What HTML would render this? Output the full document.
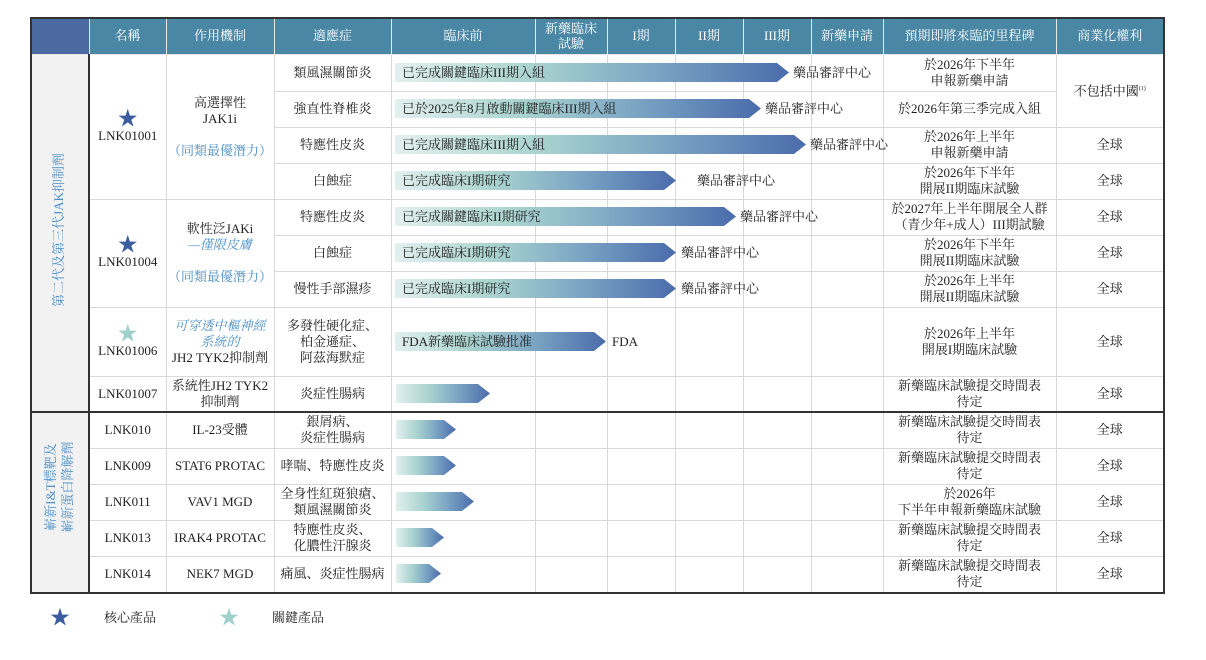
<!DOCTYPE html>
<html><head><meta charset="utf-8"><style>
*{margin:0;padding:0;box-sizing:border-box}
body{width:1206px;height:660px;background:#fff;position:relative;overflow:hidden;font-family:"Liberation Serif","Noto Serif CJK SC","Noto Sans CJK SC",serif;color:#222;font-size:13px}
table{position:absolute;left:30px;top:17px;border-collapse:collapse;table-layout:fixed;width:1133px;border:2px solid #333}
td,th{border:1px solid #d8d8d8;text-align:center;vertical-align:middle;line-height:16px;padding:0;overflow:visible;white-space:nowrap}
th{background:#4a87a5;color:#fff;font-weight:normal;border-color:#e8e8e8;height:36px}
th.c0{background:#4b6aa0}
td.grp{background:#f2f2f2;border-right:2px solid #333;color:#4a8fc8}
tr.sep td{border-top:2px solid #333}
.blue{color:#4a8fc8}
.it{font-style:italic}
.arrow{position:absolute;height:19px;background:linear-gradient(90deg,#e2f0ef 0%,#a9d3cf 35%,#7da6c4 65%,#4a6cab 100%);clip-path:polygon(0 0,calc(100% - 12px) 0,100% 50%,calc(100% - 12px) 100%,0 100%);padding-left:7px;line-height:19px;font-size:13px;color:#222;white-space:nowrap}
.lbl{position:absolute;font-size:13px;white-space:nowrap;line-height:16px}
.vt{position:absolute;transform:rotate(-90deg);white-space:nowrap;color:#4a8fc8;font-size:13px;line-height:16px;text-align:center}
.star{font-size:20px;color:#3b5da0;line-height:18px;display:block}
.star2{font-size:20px;color:#9fd0cc;line-height:18px;display:block}
sup{font-size:6px}
</style></head><body>
<table>
<colgroup><col style="width:58px"><col style="width:77px"><col style="width:108px"><col style="width:117px"><col style="width:144px"><col style="width:72px"><col style="width:68px"><col style="width:68px"><col style="width:68px"><col style="width:72px"><col style="width:173px"><col style="width:108px"></colgroup>
<tr><th class="c0"></th><th>名稱</th><th>作用機制</th><th>適應症</th><th>臨床前</th><th style="line-height:15px">新藥臨床<br>試驗</th><th>I期</th><th>II期</th><th>III期</th><th>新藥申請</th><th>預期即將來臨的里程碑</th><th>商業化權利</th></tr>
<tr style="height:37px"><td class="grp" rowspan="9"></td><td rowspan="4"><span class="star">★</span>LNK01001</td><td rowspan="4">高選擇性<br>JAK1i<br><br><span class="blue">（同類最優潛力）</span></td><td>類風濕關節炎</td><td></td><td></td><td></td><td></td><td></td><td></td><td>於2026年下半年<br>申報新藥申請</td><td rowspan="2">不包括中國<sup>(1)</sup></td></tr>
<tr style="height:36px"><td>強直性脊椎炎</td><td></td><td></td><td></td><td></td><td></td><td></td><td>於2026年第三季完成入組</td></tr>
<tr style="height:36px"><td>特應性皮炎</td><td></td><td></td><td></td><td></td><td></td><td></td><td>於2026年上半年<br>申報新藥申請</td><td>全球</td></tr>
<tr style="height:36px"><td>白蝕症</td><td></td><td></td><td></td><td></td><td></td><td></td><td>於2026年下半年<br>開展II期臨床試驗</td><td>全球</td></tr>
<tr style="height:36px"><td rowspan="3"><span class="star">★</span>LNK01004</td><td rowspan="3">軟性泛JAKi<br><span class="blue it">—僅限皮膚</span><br><br><span class="blue">（同類最優潛力）</span></td><td>特應性皮炎</td><td></td><td></td><td></td><td></td><td></td><td></td><td>於2027年上半年開展全人群<br>（青少年+成人）III期試驗</td><td>全球</td></tr>
<tr style="height:36px"><td>白蝕症</td><td></td><td></td><td></td><td></td><td></td><td></td><td>於2026年下半年<br>開展II期臨床試驗</td><td>全球</td></tr>
<tr style="height:36px"><td>慢性手部濕疹</td><td></td><td></td><td></td><td></td><td></td><td></td><td>於2026年上半年<br>開展II期臨床試驗</td><td>全球</td></tr>
<tr style="height:69px"><td><span class="star2">★</span>LNK01006</td><td><span class="blue it">可穿透中樞神經<br>系統的</span><br>JH2 TYK2抑制劑</td><td>多發性硬化症、<br>柏金遜症、<br>阿茲海默症</td><td></td><td></td><td></td><td></td><td></td><td></td><td>於2026年上半年<br>開展I期臨床試驗</td><td>全球</td></tr>
<tr style="height:36px"><td>LNK01007</td><td>系統性JH2 TYK2<br>抑制劑</td><td>炎症性腸病</td><td></td><td></td><td></td><td></td><td></td><td></td><td>新藥臨床試驗提交時間表<br>待定</td><td>全球</td></tr>
<tr class="sep" style="height:36px"><td class="grp" rowspan="5"></td><td>LNK010</td><td>IL-23受體</td><td>銀屑病、<br>炎症性腸病</td><td></td><td></td><td></td><td></td><td></td><td></td><td>新藥臨床試驗提交時間表<br>待定</td><td>全球</td></tr>
<tr style="height:36px"><td>LNK009</td><td>STAT6 PROTAC</td><td>哮喘、特應性皮炎</td><td></td><td></td><td></td><td></td><td></td><td></td><td>新藥臨床試驗提交時間表<br>待定</td><td>全球</td></tr>
<tr style="height:36px"><td>LNK011</td><td>VAV1 MGD</td><td>全身性紅斑狼瘡、<br>類風濕關節炎</td><td></td><td></td><td></td><td></td><td></td><td></td><td>於2026年<br>下半年申報新藥臨床試驗</td><td>全球</td></tr>
<tr style="height:36px"><td>LNK013</td><td>IRAK4 PROTAC</td><td>特應性皮炎、<br>化膿性汗腺炎</td><td></td><td></td><td></td><td></td><td></td><td></td><td>新藥臨床試驗提交時間表<br>待定</td><td>全球</td></tr>
<tr style="height:37px"><td>LNK014</td><td>NEK7 MGD</td><td>痛風、炎症性腸病</td><td></td><td></td><td></td><td></td><td></td><td></td><td>新藥臨床試驗提交時間表<br>待定</td><td>全球</td></tr>
</table>

<div class="vt" style="left:-41px;top:222px;width:200px">第二代及第三代JAK抑制劑</div>
<div class="vt" style="left:-1px;top:470px;width:120px;line-height:17px">嶄新I&amp;T標靶及<br>嶄新蛋白降解劑</div>

<div class="arrow" style="left:395px;top:63px;width:394px">已完成關鍵臨床III期入組</div>
<div class="lbl" style="left:793px;top:65px">藥品審評中心</div>
<div class="arrow" style="left:395px;top:99px;width:366px">已於2025年8月啟動關鍵臨床III期入組</div>
<div class="lbl" style="left:765px;top:101px">藥品審評中心</div>
<div class="arrow" style="left:395px;top:135px;width:411px">已完成關鍵臨床III期入組</div>
<div class="lbl" style="left:810px;top:137px">藥品審評中心</div>
<div class="arrow" style="left:395px;top:171px;width:281px">已完成臨床I期研究</div>
<div class="lbl" style="left:697px;top:173px">藥品審評中心</div>
<div class="arrow" style="left:395px;top:207px;width:341px">已完成關鍵臨床II期研究</div>
<div class="lbl" style="left:740px;top:209px">藥品審評中心</div>
<div class="arrow" style="left:395px;top:243px;width:281px">已完成臨床I期研究</div>
<div class="lbl" style="left:681px;top:245px">藥品審評中心</div>
<div class="arrow" style="left:395px;top:279px;width:281px">已完成臨床I期研究</div>
<div class="lbl" style="left:681px;top:281px">藥品審評中心</div>
<div class="arrow" style="left:395px;top:332px;width:211px">FDA新藥臨床試驗批准</div>
<div class="lbl" style="left:612px;top:334px">FDA</div>
<div class="arrow" style="left:396px;top:384px;width:94px"></div>
<div class="arrow" style="left:396px;top:420px;width:60px"></div>
<div class="arrow" style="left:396px;top:456px;width:60px"></div>
<div class="arrow" style="left:396px;top:492px;width:78px"></div>
<div class="arrow" style="left:396px;top:528px;width:48px"></div>
<div class="arrow" style="left:396px;top:564px;width:45px"></div>

<div class="lbl" style="left:50px;top:608px;font-size:20px;color:#3b5da0;line-height:20px">★</div>
<div class="lbl" style="left:104px;top:610px">核心產品</div>
<div class="lbl" style="left:219px;top:608px;font-size:20px;color:#9fd0cc;line-height:20px">★</div>
<div class="lbl" style="left:272px;top:610px">關鍵產品</div>
</body></html>
